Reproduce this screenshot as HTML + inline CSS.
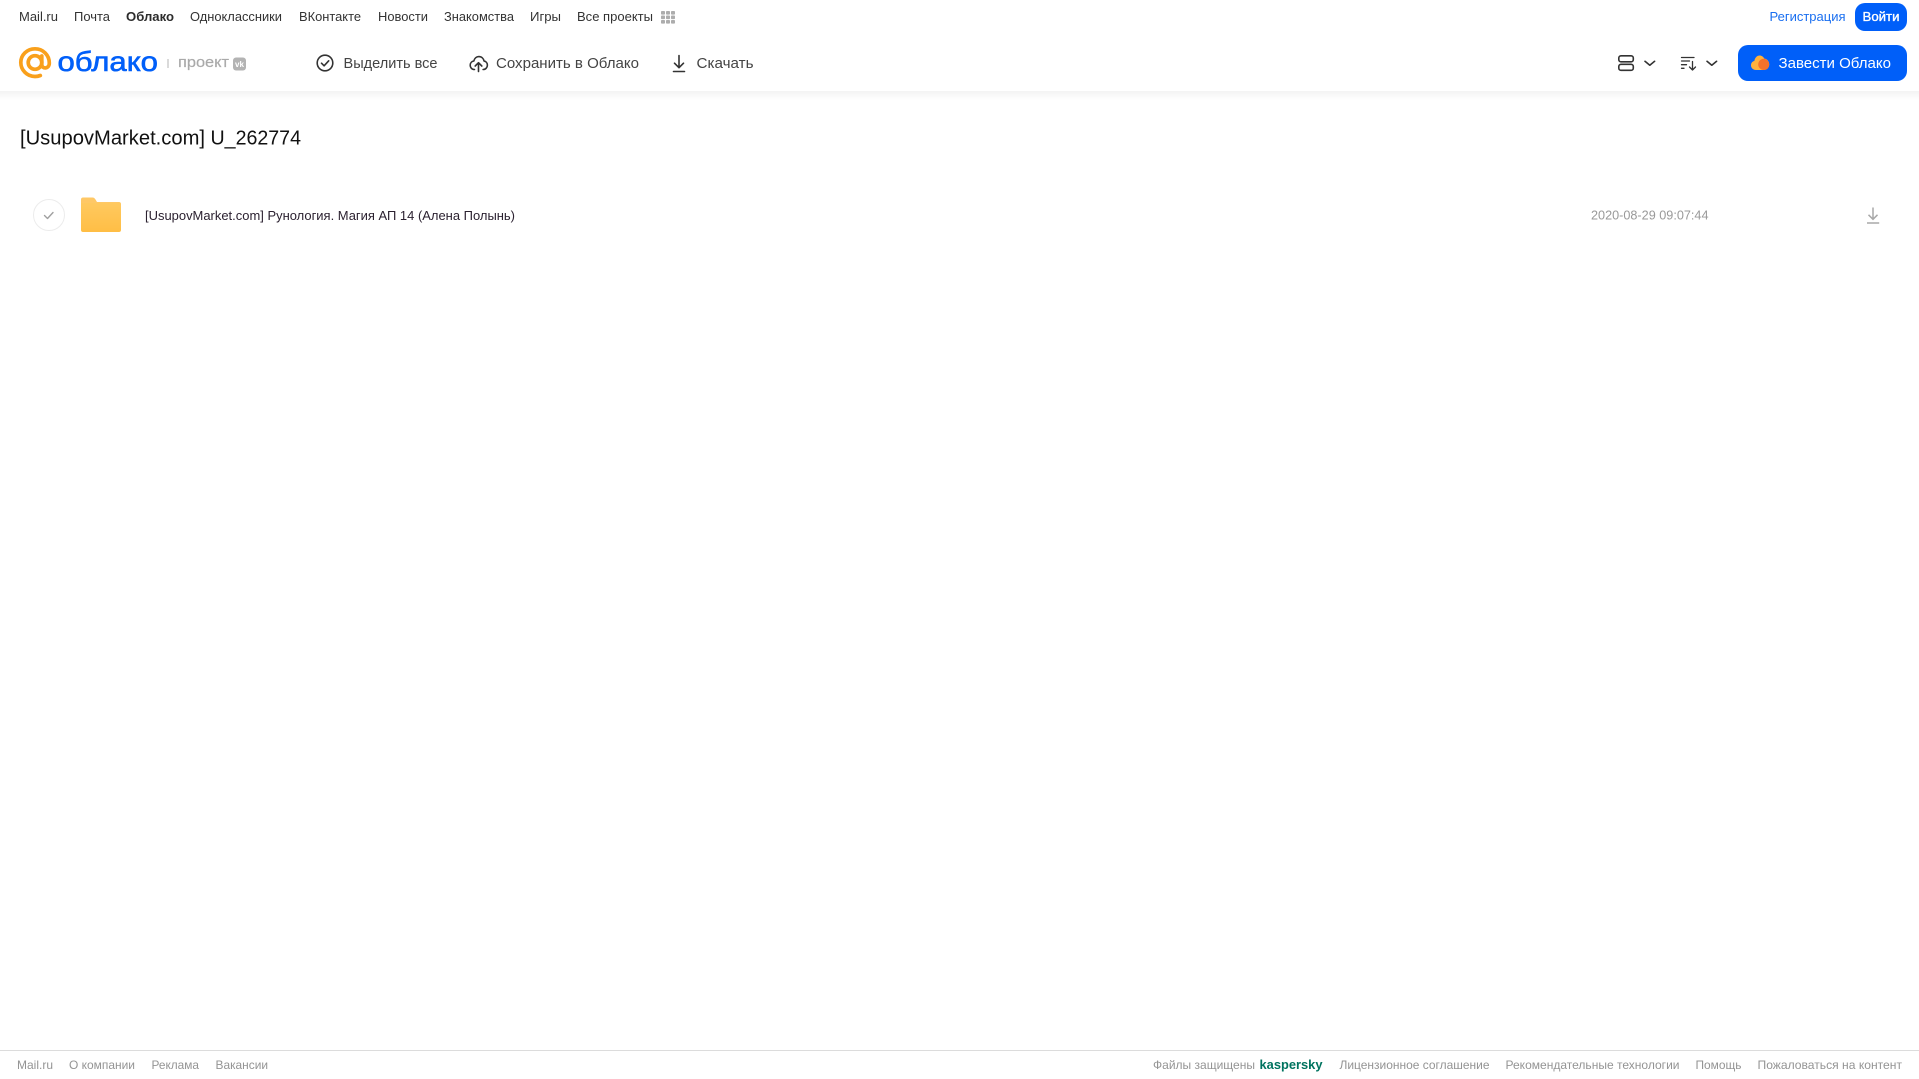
<!DOCTYPE html>
<html lang="ru">
<head>
<meta charset="utf-8">
<title>Облако</title>
<style>
html,body{margin:0;padding:0;background:#fff;width:1919px;height:1079px;overflow:hidden}
svg{display:block;position:absolute;left:0;top:0}
text{font-family:"Liberation Sans",Arial,sans-serif;white-space:pre}
.n{font-size:13px;fill:#333}
.t{font-size:15px;fill:#444}
.f{font-size:12px;fill:#949494}
.i{fill:none;stroke:#333;stroke-width:1.6;stroke-linecap:round;stroke-linejoin:round}
</style>
</head>
<body>
<svg width="1919" height="1079" viewBox="0 0 1919 1079" xmlns="http://www.w3.org/2000/svg">
<defs>
<linearGradient id="sh" x1="0" y1="0" x2="0" y2="1"><stop offset="0" stop-color="#f3f3f3"/><stop offset="1" stop-color="#fff"/></linearGradient>
<linearGradient id="fo" x1="0" y1="0" x2="0" y2="1"><stop offset="0" stop-color="#ffc95f"/><stop offset="1" stop-color="#ffbe45"/></linearGradient>
</defs>
<rect x="0" y="91" width="1919" height="9" fill="url(#sh)"/>

<!-- top nav -->
<g>
<text class="n" x="19" y="21.2" textLength="39" lengthAdjust="spacingAndGlyphs">Mail.ru</text>
<text class="n" x="74" y="21.2" textLength="36" lengthAdjust="spacingAndGlyphs">Почта</text>
<text class="n" x="126" y="21.2" textLength="48" lengthAdjust="spacingAndGlyphs" font-weight="700" style="fill:#2c2c2c">Облако</text>
<text class="n" x="190" y="21.2" textLength="92" lengthAdjust="spacingAndGlyphs">Одноклассники</text>
<text class="n" x="299" y="21.2" textLength="62" lengthAdjust="spacingAndGlyphs">ВКонтакте</text>
<text class="n" x="378" y="21.2" textLength="50" lengthAdjust="spacingAndGlyphs">Новости</text>
<text class="n" x="444" y="21.2" textLength="70" lengthAdjust="spacingAndGlyphs">Знакомства</text>
<text class="n" x="530" y="21.2" textLength="31" lengthAdjust="spacingAndGlyphs">Игры</text>
<text class="n" x="577" y="21.2" textLength="76" lengthAdjust="spacingAndGlyphs">Все проекты</text>
<g fill="#adadad">
<rect x="661" y="11" width="4" height="3.6" rx=".8"/><rect x="666" y="11" width="4" height="3.6" rx=".8"/><rect x="671" y="11" width="4" height="3.6" rx=".8"/>
<rect x="661" y="15.5" width="4" height="3.6" rx=".8"/><rect x="666" y="15.5" width="4" height="3.6" rx=".8"/><rect x="671" y="15.5" width="4" height="3.6" rx=".8"/>
<rect x="661" y="20" width="4" height="3.6" rx=".8"/><rect x="666" y="20" width="4" height="3.6" rx=".8"/><rect x="671" y="20" width="4" height="3.6" rx=".8"/>
</g>
<text x="1769.5" y="21.2" font-size="13" fill="#1a6ff0" textLength="76" lengthAdjust="spacingAndGlyphs">Регистрация</text>
<rect x="1855" y="3" width="52" height="28" rx="10" fill="#005ff9"/>
<text x="1862.5" y="21.2" font-size="13" fill="#fff" stroke="#fff" stroke-width=".35" textLength="37" lengthAdjust="spacingAndGlyphs">Войти</text>
</g>

<!-- logo -->
<g fill="none" stroke="#f9a01b" stroke-width="3.7" stroke-linecap="round">
<circle cx="35" cy="62.5" r="6.8"/>
<path d="M41.8 56v8.500c0 4.800 7.500 4.800 7.500-1.500 0-8-6.300-14.200-14.300-14.200S20.800 55 20.800 62.500 27 76.500 35 76.500c2 0 3.700-.3 5.300-1"/>
</g>
<text x="57.500" y="71" font-size="28" fill="#005ff9" stroke="#005ff9" stroke-width=".6" textLength="100.500" lengthAdjust="spacingAndGlyphs">облако</text>
<rect x="167.500" y="59" width="1" height="9" fill="#b5b5b5"/>
<text x="178" y="67" font-size="15" fill="#aaa" stroke="#aaa" stroke-width=".2" textLength="51" lengthAdjust="spacingAndGlyphs">проект</text>
<rect x="233" y="57.500" width="13" height="13" rx="3" fill="#b3b3b3"/>
<text x="235" y="66.800" font-size="8" font-weight="700" fill="#fff" textLength="9" lengthAdjust="spacingAndGlyphs">vk</text>

<!-- toolbar -->
<circle class="i" cx="325" cy="63" r="7.800"/>
<path class="i" d="M321.500 63.200l2.600 2.600 4.600-5"/>
<text class="t" x="343.500" y="68" textLength="94" lengthAdjust="spacingAndGlyphs">Выделить все</text>

<path class="i" d="M474.500 69.500c-3 0-4.300-2.300-4.300-4.300 0-2.300 1.600-3.900 3.600-4.200.7-2.800 2.800-4.400 5-4.400 2.900 0 4.800 2 5.300 4.500 2 .3 3.300 2 3.300 4 0 2.300-1.700 4.400-4.300 4.400"/>
<path class="i" d="M478.500 71.500v-8.500M475.200 66l3.300-3.300 3.300 3.300"/>
<text class="t" x="496" y="68" textLength="143" lengthAdjust="spacingAndGlyphs">Сохранить в Облако</text>

<path class="i" d="M679 55.500v12M674.500 63.200l4.500 4.500 4.500-4.500M673.500 71.500h11"/>
<text class="t" x="696.500" y="68" textLength="57" lengthAdjust="spacingAndGlyphs">Скачать</text>

<!-- right controls -->
<rect class="i" x="1618.800" y="55.800" width="14.500" height="6" rx="2.200"/>
<rect class="i" x="1618.800" y="64.300" width="14.500" height="6" rx="2.200"/>
<path class="i" d="M1645 61.300l4.800 3.900 4.800-3.900"/>
<path class="i" style="stroke-width:1.300" d="M1681.500 57.500h12.500M1681.500 61h8M1681.500 64.700h5M1681.500 68.300h2.500M1692.500 61.500v8.500M1689.500 67l3 3 3-3"/>
<path class="i" d="M1707 61.300l4.800 3.900 4.800-3.900"/>
<rect x="1738" y="45" width="169" height="36" rx="10" fill="#005ff9"/>
<path d="M1756 70c-3 0-5-2-5-4.700 0-2.300 1.400-3.900 3.400-4.400.4-3 2.500-5.400 5.200-5.400 2 0 3.800 1.200 4.600 3 2.800.3 5 2.800 5 5.800 0 3.300-2.500 5.700-5.500 5.700h-7.700z" fill="#ffb13d"/>
<path d="M1764 70c-3.400 0-5.800-2.500-5.800-5.500 0-3.200 2.500-5.700 5.600-5.700h.4c2.800.3 5 2.800 5 5.800 0 3-2.200 5.400-5.200 5.400z" fill="#f4722b"/>
<text x="1778.500" y="68" font-size="15" fill="#fff" textLength="112.500" lengthAdjust="spacingAndGlyphs">Завести Облако</text>

<!-- title -->
<text x="20" y="144.500" font-size="20" fill="#111" textLength="185" lengthAdjust="spacingAndGlyphs">[UsupovMarket.com]</text>
<text x="210.500" y="144.500" font-size="20" fill="#111" textLength="90.500" lengthAdjust="spacingAndGlyphs">U_262774</text>

<!-- row -->
<circle cx="49" cy="215" r="15.500" fill="#fff" stroke="#ececec" stroke-width="1"/>
<path d="M44.500 215.500l3 3 5.500-6" fill="none" stroke="#a0a0a0" stroke-width="1.400" stroke-linecap="round" stroke-linejoin="round"/>
<path d="M83 197.500h9.500c1.500 0 2 .7 3 2l1.500 2.500h22c1.200 0 2 .8 2 2v6H81v-10.500c0-1.200.8-2 2-2z" fill="#ffc866"/>
<path d="M81 203h38.500c.8 0 1.500.7 1.500 1.500V230c0 1.200-.8 2-2 2H83c-1.200 0-2-.8-2-2z" fill="url(#fo)"/>
<text x="145" y="219.800" font-size="13" fill="#2b2130" textLength="370" lengthAdjust="spacingAndGlyphs">[UsupovMarket.com] Рунология. Магия АП 14 (Алена Полынь)</text>
<text x="1591" y="219.500" font-size="13" fill="#999" textLength="117.500" lengthAdjust="spacingAndGlyphs">2020-08-29 09:07:44</text>
<path d="M1873 207.500v11.500M1868.500 214.800l4.500 4.500 4.500-4.500M1867 223h12.200" fill="none" stroke="#a8a8a8" stroke-width="1.500"/>

<!-- footer -->
<rect x="0" y="1050" width="1919" height="1" fill="#dcdcdc"/>
<text class="f" x="17" y="1068.800" textLength="36" lengthAdjust="spacingAndGlyphs">Mail.ru</text>
<text class="f" x="69" y="1068.800" textLength="66" lengthAdjust="spacingAndGlyphs">О компании</text>
<text class="f" x="151.500" y="1068.800" textLength="47.500" lengthAdjust="spacingAndGlyphs">Реклама</text>
<text class="f" x="215.500" y="1068.800" textLength="52.500" lengthAdjust="spacingAndGlyphs">Вакансии</text>
<text class="f" x="1153" y="1068.800" textLength="102" lengthAdjust="spacingAndGlyphs">Файлы защищены</text>
<text x="1259.500" y="1068.800" font-size="13" font-weight="700" fill="#00735f" textLength="63" lengthAdjust="spacingAndGlyphs">kaspersky</text>
<text class="f" x="1339.500" y="1068.800" textLength="150" lengthAdjust="spacingAndGlyphs">Лицензионное соглашение</text>
<text class="f" x="1505.500" y="1068.800" textLength="174" lengthAdjust="spacingAndGlyphs">Рекомендательные технологии</text>
<text class="f" x="1695.500" y="1068.800" textLength="46" lengthAdjust="spacingAndGlyphs">Помощь</text>
<text class="f" x="1757.500" y="1068.800" textLength="144.500" lengthAdjust="spacingAndGlyphs">Пожаловаться на контент</text>
</svg>
</body>
</html>
